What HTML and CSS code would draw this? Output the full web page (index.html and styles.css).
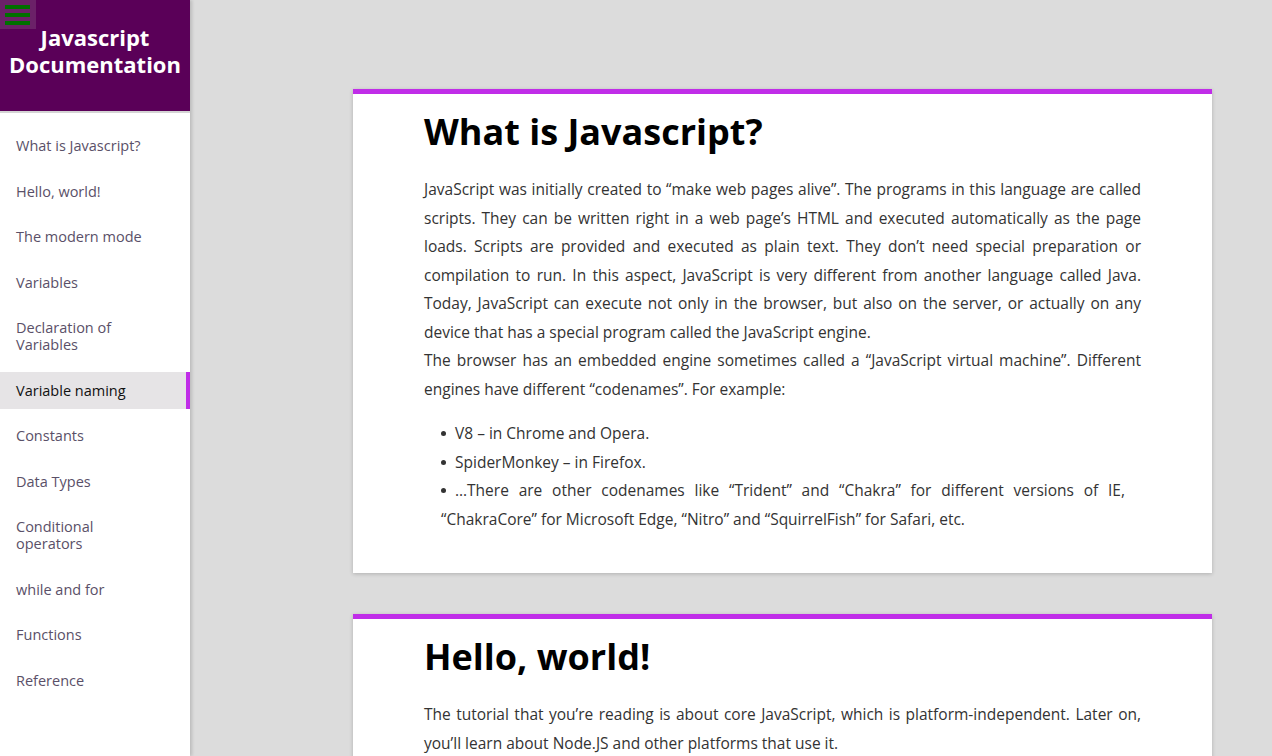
FILE: index.html
```html
<!DOCTYPE html>
<html lang="en">
<head>
<meta charset="utf-8">
<title>Javascript Documentation</title>
<link rel="stylesheet" href="styles.css">
</head>
<body>
<div class="page">
  <nav class="sidebar" id="navbar">
    <header class="side-head">
      <button class="burger" aria-label="menu">
        <span class="bar"></span><span class="bar"></span><span class="bar"></span>
      </button>
      <h2 class="side-title">Javascript Documentation</h2>
    </header>
    <ul class="nav-list">
      <li><a class="nav-link" href="#What_is_Javascript">What is Javascript?</a></li>
      <li><a class="nav-link" href="#Hello_world">Hello, world!</a></li>
      <li><a class="nav-link" href="#The_modern_mode">The modern mode</a></li>
      <li><a class="nav-link" href="#Variables">Variables</a></li>
      <li><a class="nav-link" href="#Declaration">Declaration of Variables</a></li>
      <li><a class="nav-link active" href="#Variable_naming">Variable naming</a></li>
      <li><a class="nav-link" href="#Constants">Constants</a></li>
      <li><a class="nav-link" href="#Data_Types">Data Types</a></li>
      <li><a class="nav-link" href="#Conditional">Conditional operators</a></li>
      <li><a class="nav-link" href="#While">while and for</a></li>
      <li><a class="nav-link" href="#Functions">Functions</a></li>
      <li><a class="nav-link" href="#Reference">Reference</a></li>
    </ul>
  </nav>
  <main class="main" id="main-doc">
    <section class="card" id="What_is_Javascript">
      <h1 class="card-title">What is Javascript?</h1>
      <p class="text">JavaScript was initially created to “make web pages alive”. The programs in this language are called scripts. They can be written right in a web page’s HTML and executed automatically as the page loads. Scripts are provided and executed as plain text. They don’t need special preparation or compilation to run. In this aspect, JavaScript is very different from another language called Java. Today, JavaScript can execute not only in the browser, but also on the server, or actually on any device that has a special program called the JavaScript engine.<br>The browser has an embedded engine sometimes called a “JavaScript virtual machine”. Different engines have different “codenames”. For example:</p>
      <ul class="list">
        <li class="item">V8 – in Chrome and Opera.</li>
        <li class="item">SpiderMonkey – in Firefox.</li>
        <li class="item">…There are other codenames like “Trident” and “Chakra” for different versions of IE, “ChakraCore” for Microsoft Edge, “Nitro” and “SquirrelFish” for Safari, etc.</li>
      </ul>
    </section>
    <section class="card" id="Hello_world">
      <h1 class="card-title">Hello, world!</h1>
      <p class="text">The tutorial that you’re reading is about core JavaScript, which is platform-independent. Later on, you’ll learn about Node.JS and other platforms that use it.</p>
    </section>
  </main>
</div>
</body>
</html>
```

FILE: styles.css
```css
* { box-sizing: border-box; }
html, body {
  margin: 0;
  padding: 0;
  height: 100%;
  overflow: hidden;
}
body {
  background: #dcdcdc;
  font-family: "Open Sans", "Noto Sans", sans-serif;
  color: #333;
}
.page {
  display: flex;
  height: 756px;
  overflow: hidden;
}
.sidebar {
  width: 190px;
  flex: 0 0 190px;
  background: #fff;
  box-shadow: 2px 0 3px rgba(0,0,0,0.15);
  display: flex;
  flex-direction: column;
  position: relative;
  z-index: 1;
}
.side-head {
  background: #5a0058;
  height: 113px;
  border-bottom: 2px solid #d4d4d4;
  position: relative;
  padding-top: 24px;
}
.burger {
  position: absolute;
  top: 0;
  left: 0;
  width: 36px;
  height: 29px;
  background: #6b2168;
  border: 0;
  padding: 5px 6px 0 5px;
  display: flex;
  flex-direction: column;
  gap: 4.5px;
}
.bar {
  display: block;
  width: 25px;
  height: 3.5px;
  background: #007000;
}
.side-title {
  margin: 0;
  color: #fff;
  font-weight: 700;
  font-size: 22px;
  line-height: 27px;
  text-align: center;
}
.nav-list {
  list-style: none;
  margin: 0;
  padding: 14px 0 0;
}
.nav-link {
  display: block;
  padding: 10px 40px 10px 16px;
  font-size: 14.5px;
  line-height: 17px;
  color: #5a5068;
  text-decoration: none;
  margin-bottom: 8.5px;
}
.nav-link.active {
  background: #e6e4e6;
  color: #111;
  border-right: 4px solid #c02de8;
}
.main {
  flex: 1;
  padding: 89px 60px 0 163px;
}
.card {
  background: #fff;
  border-top: 5px solid #c02de8;
  box-shadow: 0 1px 4px rgba(0,0,0,0.2);
  padding: 15px 71px 40px;
  margin-bottom: 41px;
}
.card-title {
  margin: 0 0 20px;
  font-size: 36px;
  line-height: 46px;
  font-weight: 700;
  color: #000;
}
.text {
  margin: 0;
  font-size: 15.5px;
  line-height: 28.5px;
  text-align: justify;
  color: #333;
}
.list {
  list-style: none;
  margin: 16px 16px 0 0;
  padding: 0 0 0 17px;
  font-size: 15.5px;
  line-height: 28.5px;
  text-align: justify;
}
.item::before {
  content: "";
  display: inline-block;
  width: 5px;
  height: 5px;
  border-radius: 50%;
  background: #333;
  margin-right: 9px;
  vertical-align: middle;
  position: relative;
  top: -1px;
}
```
